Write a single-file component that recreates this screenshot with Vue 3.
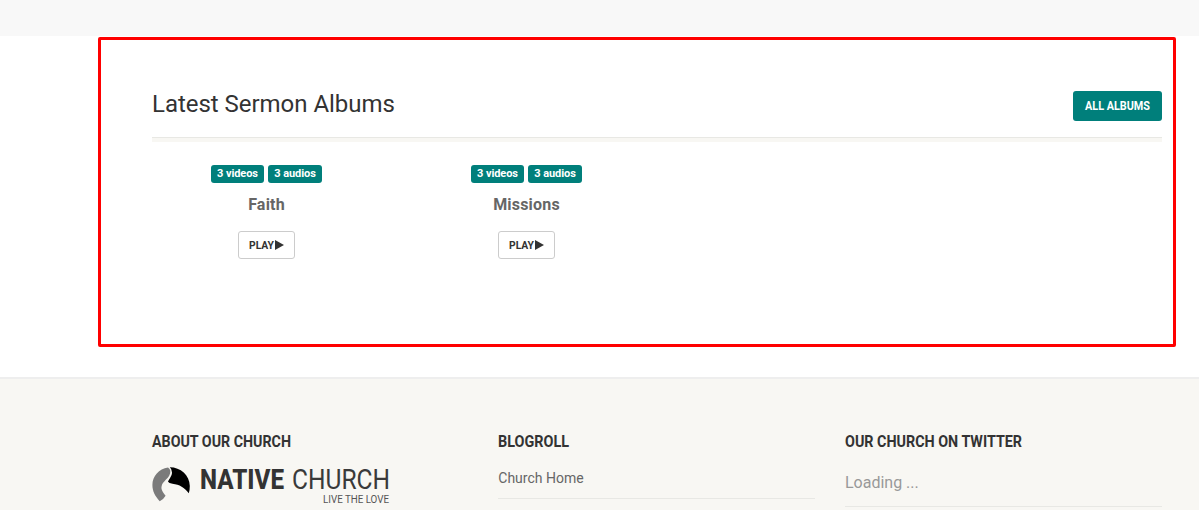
<script setup>
import { h } from 'vue'

const albums = ['Faith', 'Missions']

// Bold Roboto fitted to a condensed width
const CondensedText = (props) =>
  h('svg', { width: props.width, height: props.height, class: 'condensed' }, [
    h('text', {
      x: 0,
      y: props.base,
      'font-size': props.size,
      'font-weight': props.weight || 700,
      fill: 'currentColor',
      textLength: props.width,
      lengthAdjust: 'spacingAndGlyphs',
    }, props.label),
  ])
CondensedText.props = ['label', 'width', 'height', 'base', 'size', 'weight']
</script>

<template>
  <div class="page">
    <div class="band"></div>
    <main>
      <section class="frame">
        <header class="heading">
          <h2>Latest Sermon Albums</h2>
          <a class="all"><CondensedText label="ALL ALBUMS" :width="65" :height="14" :base="11" :size="12" /></a>
        </header>
        <div class="albums">
          <article v-for="name in albums" :key="name" class="album">
            <div class="badges">
              <span class="badge first">3 videos</span>
              <span class="badge">3 audios</span>
            </div>
            <h3>{{ name }}</h3>
            <a class="play">
              <CondensedText label="PLAY" :width="25" :height="12" :base="10" :size="11" />
              <svg class="arrow" width="9" height="10" viewBox="0 0 9 10"><path d="M0 0L9 5L0 10Z" fill="#333" /></svg>
            </a>
          </article>
        </div>
      </section>
    </main>
    <footer>
      <section>
        <h4><CondensedText label="ABOUT OUR CHURCH" :width="139" :height="18" :base="15" :size="16" /></h4>
        <svg class="logo" width="240" height="40" viewBox="0 0 240 40">
          <path d="M16 .5C7 2 .4 9 .4 18C.4 24 3 29 7.700 34.300Q11.500 32.500 13.600 28.800C11 25 8.500 22.500 9.800 18.500C11 14.500 15 12.500 17.300 8.500Q20 3 16 .5Z" fill="#7b7b7b" />
          <path d="M17.800 .3C28.500 .3 37.600 8 37.800 19Q37.800 23 36.800 26.300C32.500 20.500 27.500 17.700 20.500 16.800Q17 16.400 16 14.800C16.500 12.500 20 9.500 20 5.500Q20 2 17.800 .3Z" fill="#000" />
          <text x="48" y="21.500" font-size="28" font-weight="800" textLength="84" lengthAdjust="spacingAndGlyphs" fill="#333">NATIVE</text>
          <text x="140" y="21.500" font-size="28" font-weight="400" textLength="98" lengthAdjust="spacingAndGlyphs" fill="#3a3a3a">CHURCH</text>
          <text x="171" y="35.500" font-size="11.500" textLength="66" lengthAdjust="spacingAndGlyphs" fill="#555">LIVE THE LOVE</text>
        </svg>
      </section>
      <section>
        <h4><CondensedText label="BLOGROLL" :width="71" :height="18" :base="15" :size="16" /></h4>
        <p class="link">Church Home</p>
      </section>
      <section>
        <h4><CondensedText label="OUR CHURCH ON TWITTER" :width="177" :height="18" :base="15" :size="16" /></h4>
        <p class="loading">Loading ...</p>
      </section>
    </footer>
  </div>
</template>

<style>
body { margin: 0; overflow: hidden; }
</style>

<style scoped>
* { box-sizing: border-box; }
.page { height: 510px; overflow: hidden; background: #fff; color: #333; font-family: Roboto, "Liberation Sans", sans-serif; }
h2, h3, h4, p { margin: 0; }
.condensed, svg { display: block; overflow: visible; }
.band { height: 36px; background: #f8f8f8; }
main { height: 341px; padding: 1px 23px 0 98px; }
.frame { height: 310px; border: 3px solid #f00; border-radius: 2px; padding: 51px 11px 0 51px; }
.heading { height: 51px; display: flex; justify-content: space-between; align-items: flex-start; border-bottom: 4px solid #f8f7f3; box-shadow: inset 0 -1px #e8e8e4; }
h2 { font-size: 24px; line-height: 26px; font-weight: 400; letter-spacing: -.03px; }
.all { display: flex; align-items: center; justify-content: center; width: 89px; height: 30px; border-radius: 3px; background: #007f7b; color: #fff; }
.albums { display: flex; gap: 32px; padding-top: 23px; }
.album { width: 228px; display: flex; flex-direction: column; align-items: center; }
.badges { display: flex; gap: 4px; margin-left: 1px; }
.badge { width: 54px; height: 18px; border-radius: 3px; background: #007f7b; color: #fff; font-size: 11px; line-height: 17px; font-weight: 700; text-align: center; letter-spacing: -.08px; white-space: nowrap; }
.badge.first { width: 53px; }
h3 { margin-top: 11px; font-size: 16px; line-height: 22px; font-weight: 700; color: #666; letter-spacing: .2px; margin-left: 1px; }
.play { margin-top: 15px; margin-left: 1px; width: 57px; height: 28px; border: 1px solid #ccc; border-radius: 3px; display: flex; align-items: center; justify-content: center; gap: 1px; }
footer { height: 133px; border-top: 2px solid #eee; background: #f8f7f3; padding: 53px 37.4px 0 151.6px; display: grid; grid-template-columns: repeat(3, 1fr); gap: 30px; }
h4 { height: 18px; }
.logo { margin-top: 17px; }
.link { margin-top: 16px; height: 33px; border-bottom: 1px solid #e8e8e4; font-size: 14px; line-height: 24px; color: #666; }
.loading { margin-top: 20px; height: 37px; border-bottom: 1px solid #e8e8e4; font-size: 16px; line-height: 26px; color: #999; }
</style>
